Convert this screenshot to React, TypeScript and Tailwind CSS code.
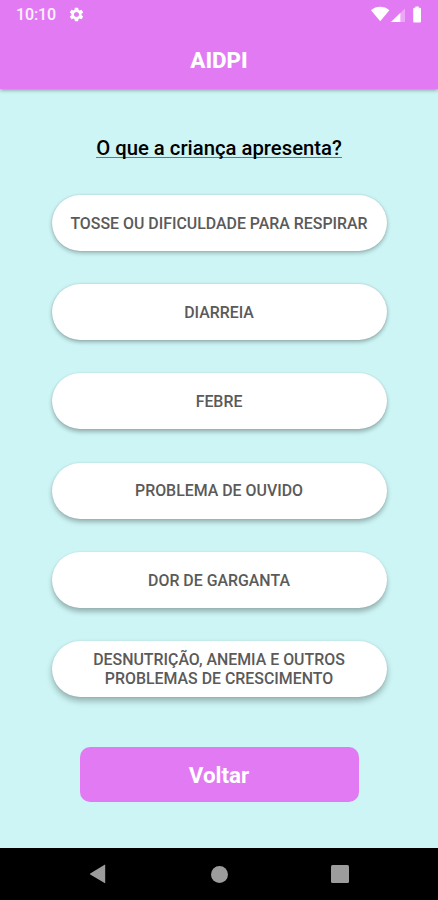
import { MdSettings } from "react-icons/md";

// a sombra cresce conforme o botão fica mais abaixo na tela
const symptoms = [
  { id: 1, label: "TOSSE OU DIFICULDADE PARA RESPIRAR", shadow: "shadow-[0_2px_4px_rgba(0,0,0,0.28),0_0_2px_rgba(0,0,0,0.12)]" },
  { id: 2, label: "DIARREIA", shadow: "shadow-[0_2px_4px_rgba(0,0,0,0.3),0_0_2px_rgba(0,0,0,0.12)]" },
  { id: 3, label: "FEBRE", shadow: "shadow-[0_3px_4px_rgba(0,0,0,0.27),0_0_2px_rgba(0,0,0,0.12)]" },
  { id: 4, label: "PROBLEMA DE OUVIDO", shadow: "shadow-[0_3px_5px_rgba(0,0,0,0.28),0_0_2px_rgba(0,0,0,0.1)]" },
  { id: 5, label: "DOR DE GARGANTA", shadow: "shadow-[0_4px_5px_rgba(0,0,0,0.26),0_0_2px_rgba(0,0,0,0.1)]" },
  { id: 6, label: "DESNUTRIÇÃO, ANEMIA E OUTROS PROBLEMAS DE CRESCIMENTO", shadow: "shadow-[0_4px_6px_rgba(0,0,0,0.28),0_0_2px_rgba(0,0,0,0.1)]" },
];

function StatusBar() {
  return (
    <div className="flex h-[29px] items-center justify-between pl-4 pr-[15px] text-white">
      <div className="flex items-center gap-[12px]">
        <span className="w-10 text-[16px] leading-none font-medium tracking-[-0.1px] text-white/90">10:10</span>
        <MdSettings size={17} />
      </div>
      <svg width="52" height="18" viewBox="0 0 52 18" fill="currentColor">
        {/* wifi */}
        <path d="M0 4.3C5.2-0.3 13.2-0.3 18.4 4.3L9.2 15.2Z" />
        {/* sinal */}
        <path d="M34 2.5V16H20Z" opacity="0.35" />
        <path d="M29.3 7V16H20Z" />
        {/* bateria */}
        <path d="M43.2 1.8h1.2V.5h3.4v1.3H49a1 1 0 0 1 1 1V15.5a1 1 0 0 1-1 1h-5.8a1 1 0 0 1-1-1V2.8a1 1 0 0 1 1-1Z" />
      </svg>
    </div>
  );
}

export default function App() {
  return (
    <div className="flex h-[900px] w-[438px] flex-col overflow-hidden bg-[#cdf5f5] font-['Roboto',sans-serif]">
      <header className="h-[89px] shrink-0 bg-[#e27af3] shadow-[0_1px_4px_rgba(0,0,0,0.4)]">
        <StatusBar />
        <h1 className="mt-[15px] text-center text-[22.4px] leading-8 font-extrabold text-white">AIDPI</h1>
      </header>

      <main className="flex flex-1 flex-col items-center pt-[48px]">
        <h2 className="h-[21px] border-b border-black/50 text-[20.3px] leading-[22px] font-medium whitespace-nowrap text-black">
          O que a criança apresenta?
        </h2>

        {/* opções de sintomas */}
        <div className="mt-[37px] flex w-[335px] flex-col gap-[33.2px]">
          {symptoms.map((symptom) => (
            <button
              key={symptom.id}
              className={`flex h-14 items-center justify-center rounded-full bg-white px-4 pt-[2px] text-center text-[15.9px] leading-[18.5px] font-medium text-[#5a5a5a] ${symptom.shadow}`}
            >
              {symptom.label}
            </button>
          ))}
        </div>

        <button className="mt-[50px] h-[55px] w-[279px] rounded-[10px] bg-[#e27af3] pt-[3px] text-[22.4px] font-bold text-white">
          Voltar
        </button>
      </main>

      {/* barra de navegação do Android */}
      <nav className="flex h-[52px] shrink-0 items-center justify-between bg-black pr-[89px] pl-[89px] text-[#9c9c9c]">
        <svg width="18" height="20" viewBox="0 0 18 20" fill="currentColor">
          <path d="M16.2.9V18.9Q16.2 19.4 15.6 19.1L1.2 10.6Q.6 10 1.2 9.4L15.6.8Q16.2.4 16.2.9Z" />
        </svg>
        <span className="size-[17px] rounded-full bg-[#9c9c9c]" />
        <span className="size-[18px] rounded-[1.5px] bg-[#9c9c9c]" />
      </nav>
    </div>
  );
}
